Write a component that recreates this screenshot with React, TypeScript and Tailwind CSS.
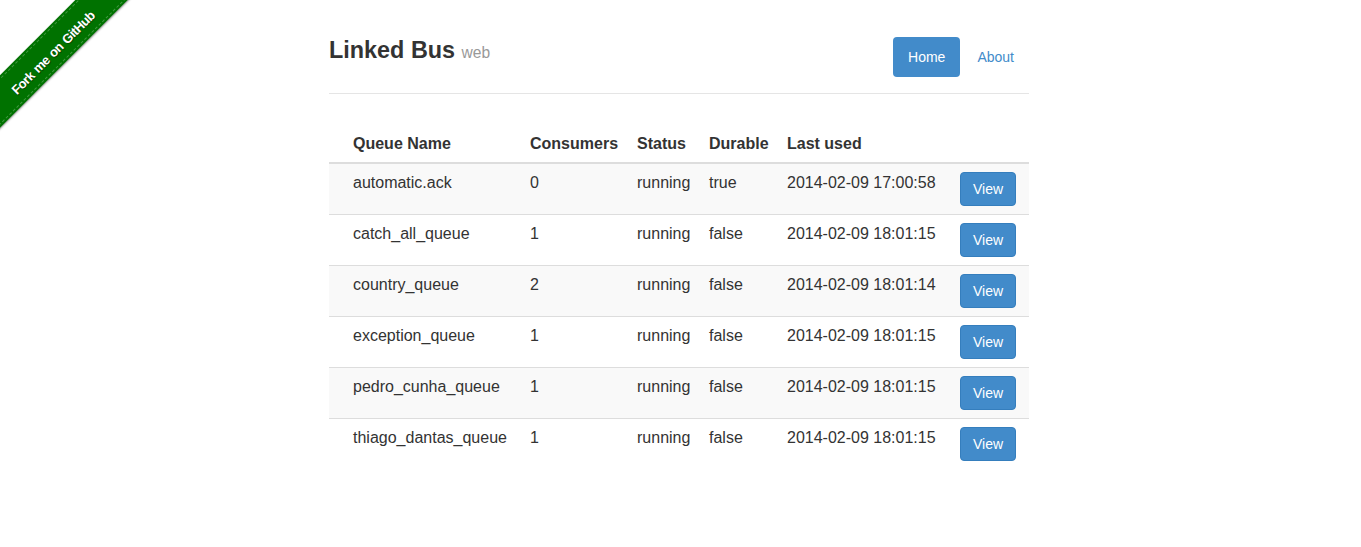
import React from 'react';

const queues = [
  { name: 'automatic.ack', consumers: 0, status: 'running', durable: 'true', lastUsed: '2014-02-09 17:00:58' },
  { name: 'catch_all_queue', consumers: 1, status: 'running', durable: 'false', lastUsed: '2014-02-09 18:01:15' },
  { name: 'country_queue', consumers: 2, status: 'running', durable: 'false', lastUsed: '2014-02-09 18:01:14' },
  { name: 'exception_queue', consumers: 1, status: 'running', durable: 'false', lastUsed: '2014-02-09 18:01:15' },
  { name: 'pedro_cunha_queue', consumers: 1, status: 'running', durable: 'false', lastUsed: '2014-02-09 18:01:15' },
  { name: 'thiago_dantas_queue', consumers: 1, status: 'running', durable: 'false', lastUsed: '2014-02-09 18:01:15' },
];

function ForkRibbon() {
  return (
    <a href="#" className="absolute left-0 top-0 w-[150px] h-[150px] overflow-hidden">
      <div className="absolute left-[-49px] top-[32px] w-[200px] h-[37px] -rotate-45 bg-[#007200] shadow-[0_1px_2px_rgba(0,0,0,0.45)] py-[2px]">
        <div className="h-full border-y border-dashed border-[#3f9a3f] flex items-center justify-center pt-[6px] text-white text-[13px] font-bold tracking-[-0.5px] [word-spacing:1px] [text-shadow:0_1px_1px_rgba(0,0,0,0.6)]">
          Fork me on GitHub
        </div>
      </div>
    </a>
  );
}

export default function App() {
  return (
    <div className="relative min-h-[547px] bg-white text-[#333] text-[14px] leading-[20px] font-['Liberation_Sans',Arial,sans-serif]">
      <ForkRibbon />
      <div className="flex justify-center pr-[3px]">
        <div className="w-[700px]">
          {/* Header */}
          <div className="h-[94px] pt-[30px] border-b border-[#e5e5e5] flex items-start justify-between">
            <h3 className="text-[23.4px] leading-[40px] font-bold text-[#333]">
              Linked Bus <small className="text-[15.6px] font-normal text-[#999]">web</small>
            </h3>
            <ul className="flex mt-[7px] gap-[2px]">
              <li>
                <a href="#" className="block px-[15px] py-[10px] rounded-[4px] bg-[#428bca] text-white">Home</a>
              </li>
              <li>
                <a href="#" className="block px-[15px] py-[10px] rounded-[4px] text-[#428bca]">About</a>
              </li>
            </ul>
          </div>

          {/* Queues */}
          <table className="mt-[32px] w-full table-fixed border-collapse text-[16px]">
            <colgroup>
              <col className="w-[193px]" />
              <col className="w-[107px]" />
              <col className="w-[72px]" />
              <col className="w-[78px]" />
              <col className="w-[173px]" />
              <col className="w-[77px]" />
            </colgroup>
            <thead>
              <tr className="border-b-2 border-[#ddd] text-left">
                <th className="pl-6 pr-2 py-2 font-bold">Queue Name</th>
                <th className="px-2 py-2 font-bold">Consumers</th>
                <th className="px-2 py-2 font-bold">Status</th>
                <th className="px-2 py-2 font-bold">Durable</th>
                <th className="px-2 py-2 font-bold">Last used</th>
                <th className="px-2 py-2"></th>
              </tr>
            </thead>
            <tbody>
              {queues.map((q, i) => (
                <tr key={q.name} className={`align-top ${i > 0 ? 'border-t border-[#ddd]' : ''} ${i % 2 === 0 ? 'bg-[#f9f9f9]' : ''}`}>
                  <td className="pl-6 pr-2 pt-[9px] pb-2 whitespace-nowrap">{q.name}</td>
                  <td className="px-2 pt-[9px] pb-2">{q.consumers}</td>
                  <td className="px-2 pt-[9px] pb-2">{q.status}</td>
                  <td className="px-2 pt-[9px] pb-2">{q.durable}</td>
                  <td className="px-2 pt-[9px] pb-2 whitespace-nowrap">{q.lastUsed}</td>
                  <td className="px-2 py-2">
                    <button className="px-[12px] py-[6px] rounded-[4px] bg-[#428bca] border border-[#357ebd] text-white text-[14px] leading-[20px]">View</button>
                  </td>
                </tr>
              ))}
            </tbody>
          </table>
        </div>
      </div>
    </div>
  );
}
